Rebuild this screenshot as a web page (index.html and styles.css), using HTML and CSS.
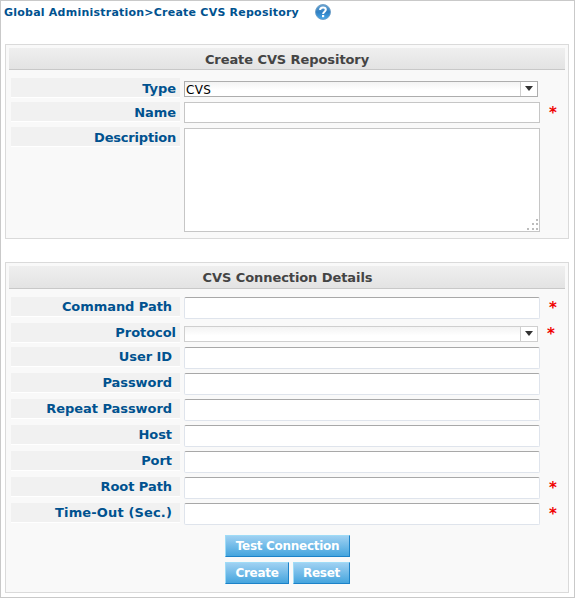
FILE: index.html
```html
<!DOCTYPE html>
<html lang="en">
<head>
<meta charset="utf-8">
<title>Create CVS Repository</title>
<link rel="stylesheet" href="styles.css">
</head>
<body>
<main class="page">
  <header class="crumbs">
    <span class="crumb-text">Global Administration&gt;Create CVS Repository</span>
    <svg class="help" width="16" height="16" viewBox="0 0 16 16">
      <defs>
        <linearGradient id="ball" x1="0" y1="0" x2="0" y2="1">
          <stop offset="0" stop-color="#6ba5d3"/>
          <stop offset=".5" stop-color="#2f7fc2"/>
          <stop offset="1" stop-color="#49a9ea"/>
        </linearGradient>
      </defs>
      <circle cx="8" cy="8" r="7.5" fill="url(#ball)" stroke="#6d9dc4" stroke-width=".9"/>
      <path d="M5.100 6C5.100 4.200 6.300 3.500 8 3.500C9.800 3.500 10.800 4.400 10.800 5.800C10.800 7.700 8.100 7.700 8.100 10" fill="none" stroke="#fff" stroke-width="2"/>
      <rect x="7" y="11" width="2.200" height="2.200" fill="#fff"/>
    </svg>
  </header>

  <section class="panel repo">
    <h2>Create CVS Repository</h2>
    <div class="row r24"><label class="wide">Type</label><div class="select dark"><span>CVS</span><i><b></b></i></div></div>
    <div class="row r25"><label class="wide">Name</label><input class="plain"><em>*</em></div>
    <div class="row area"><label class="wide tight">Description</label>
      <div class="textarea"><svg width="13" height="13" viewBox="0 0 13 13" fill="#bcbcbc"><path d="M10 1h2v2h-2zM6 5h2v2h-2zM10 5h2v2h-2zM1 10h2v2h-2zM6 10h2v2h-2zM10 10h2v2h-2z"/></svg></div>
    </div>
  </section>

  <section class="panel conn">
    <h2>CVS Connection Details</h2>
    <div class="row"><label>Command Path</label><input><em>*</em></div>
    <div class="row r24"><label class="wide">Protocol</label><div class="select"><span></span><i><b></b></i></div><em class="near">*</em></div>
    <div class="row"><label>User ID</label><input></div>
    <div class="row"><label>Password</label><input></div>
    <div class="row"><label>Repeat Password</label><input></div>
    <div class="row"><label>Host</label><input></div>
    <div class="row"><label>Port</label><input></div>
    <div class="row"><label>Root Path</label><input><em>*</em></div>
    <div class="row"><label class="loose">Time-Out (Sec.)</label><input><em>*</em></div>
    <div class="buttons">
      <button class="test">Test Connection</button>
      <button class="create">Create</button>
      <button class="reset">Reset</button>
    </div>
  </section>
</main>
</body>
</html>
```
FILE: styles.css
```css
* { box-sizing: border-box; }
body { margin: 0; background: #fff; font: 13px/16px "DejaVu Sans", Verdana, sans-serif; }
.page { width: 575px; height: 598px; border: 1px solid #c9c9c9; padding: 0 5px 0 4px; overflow: hidden; }

.crumbs { height: 43px; display: flex; align-items: flex-start; padding-top: 3px; margin-left: -1px; color: #00528f; }
.crumb-text { width: 311px; padding-top: 1px; font-size: 11px; font-weight: bold; letter-spacing: .23px; white-space: nowrap; }
.help { display: block; flex: none; }

.panel { width: 564px; border: 1px solid #dadada; background: #f9f9f9; padding: 3px; }
.repo { height: 195px; margin-bottom: 23px; }
.conn { height: 331px; }
h2 { margin: 0 0 8px; height: 22px; font-size: 13px; line-height: 23px; letter-spacing: -.08px; text-align: center; color: #444; background: linear-gradient(#efefef, #e3e3e3); border-bottom: 1px solid #c8c8c8; }
.conn h2 { height: 23px; line-height: 24px; padding-left: 1px; }

.row { display: flex; align-items: flex-start; height: 26px; margin-left: 2px; }
.row.r24 { height: 24px; }
.row.r25 { height: 25px; }
.row.area { height: 105px; }
label { flex: none; width: 169px; height: 20px; margin-right: 4px; padding-right: 8px; background: #f1f1f1; border-bottom: 1px solid #fff; color: #00528f; font-weight: bold; line-height: 19px; text-align: right; letter-spacing: -.06px; white-space: nowrap; }
label.wide { padding-right: 4px; }
label.tight { letter-spacing: -.2px; }
label.loose { letter-spacing: .14px; }
.repo label { line-height: 21px; }

input { flex: none; width: 356px; height: 22px; padding: 0 3px; margin: 0; background: #fff; border: 1px solid #dfe4ec; border-top-color: #a8a8a8; border-radius: 2px; outline: 0; }
input.plain { height: 21px; border-color: #c6c6c6; border-radius: 0; }
.select { flex: none; display: flex; width: 354px; height: 16px; margin-top: 3px; border: 1px solid #cfcfcf; background: linear-gradient(#f3f3f3, #fff 60%); font-size: 12px; line-height: 16px; }
.select.dark { border-color: #adadad; }
.select span { flex: 1; padding-left: 1px; letter-spacing: .3px; }
.select i { width: 17px; border-left: 1px solid #cfcfcf; background: #fff; display: flex; justify-content: center; padding-top: 4px; }
.select b { width: 0; height: 0; border: 4px solid transparent; border-top: 5px solid #333; border-bottom: 0; }
em { margin-left: 9px; font-size: 15px; font-style: normal; font-weight: bold; color: #f00000; line-height: 23px; }
em.near { line-height: 22px; }
.textarea { display: flex; align-items: flex-end; justify-content: flex-end; width: 356px; height: 104px; margin-top: 1px; border: 1px solid #c6c6c6; background: #fff; }

.buttons { display: flex; flex-wrap: wrap; gap: 5px 4px; width: 125px; margin: 6px 0 0 216px; }
button { height: 22px; padding: 1px 0 0; margin: 0; border: 1px solid #9fdcf7; border-right-color: #1c82c8; border-bottom-color: #1c82c8; background: linear-gradient(#9fd1f2, #45a5de); color: #fff; font: bold 12px/19px "DejaVu Sans", Verdana, sans-serif; letter-spacing: -.3px; white-space: nowrap; }
.test { width: 125px; }
.create { width: 64px; }
.reset { width: 57px; }
```
